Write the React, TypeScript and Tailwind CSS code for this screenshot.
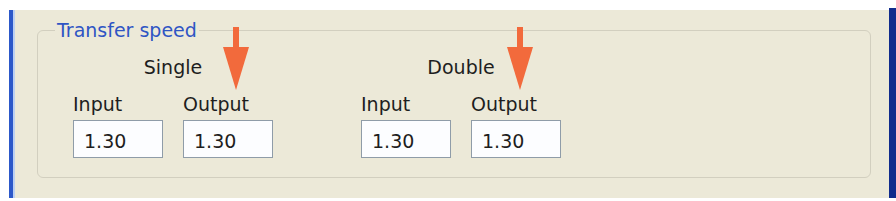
function Arrow({ left }: { left: string }) {
  return (
    <svg
      className={`absolute top-[26px] ${left}`}
      width="28"
      height="66"
      viewBox="0 0 28 66"
    >
      <rect x="11" y="1" width="6" height="24" fill="#f26a3c" />
      <polygon points="1,21 27,21 14,64" fill="#f26a3c" />
    </svg>
  );
}

function ValueBox({ value }: { value: string }) {
  return (
    <div className="h-[38px] w-[90px] border border-[#8f9ca8] bg-[#fcfdff] pl-[10px] pt-[9px] leading-[22px]">
      {value}
    </div>
  );
}

function SpeedPair({ title }: { title: string }) {
  return (
    <div className="flex flex-col">
      <div className="text-center leading-[22px]">{title}</div>
      <div className="mt-[15px] flex gap-[20px]">
        <div className="flex flex-col gap-[5px]">
          <span className="leading-[22px]">Input</span>
          <ValueBox value="1.30" />
        </div>
        <div className="flex flex-col gap-[5px]">
          <span className="leading-[22px]">Output</span>
          <ValueBox value="1.30" />
        </div>
      </div>
    </div>
  );
}

export default function App() {
  return (
    <div
      className="relative h-[201px] w-[896px] bg-white pl-[9px] pt-[10px] text-[19px] text-[#1e1e1e]"
      style={{ fontFamily: '"DejaVu Sans", Verdana, sans-serif' }}
    >
      <div className="flex h-[188px]">
        <div className="w-[4px] bg-[#2c58c9]" />
        <div className="w-[2px] bg-[#bcd0f2]" />
        <div className="flex-1 bg-[#ece9d8] pl-[22px] pr-[18px] pt-[9px]">
          <fieldset className="rounded-[6px] border border-[#d2cfbf] pb-[19px]">
            <legend className="ml-[17px] px-[2px] leading-[22px] text-[#2f55c4]">
              Transfer speed
            </legend>
            <div className="flex gap-[88px] pl-[35px] pt-[15px]">
              <SpeedPair title="Single" />
              <SpeedPair title="Double" />
            </div>
          </fieldset>
        </div>
        <div className="-mt-[2px] w-[7px] bg-[#102b8c]" />
      </div>
      <Arrow left="left-[222px]" />
      <Arrow left="left-[506px]" />
    </div>
  );
}
